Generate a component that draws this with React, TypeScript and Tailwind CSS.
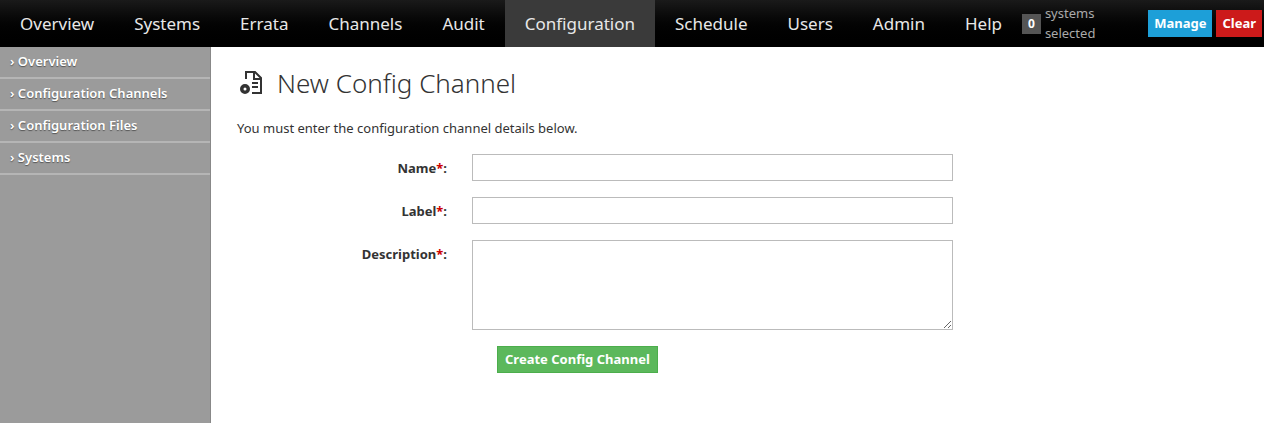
import React from "react"

const nav = ["Overview", "Systems", "Errata", "Channels", "Audit", "Configuration", "Schedule", "Users", "Admin", "Help"]
const side = ["Overview", "Configuration Channels", "Configuration Files", "Systems"]

function Label({ text }: { text: string }) {
  return (
    <div className="w-[235px] pr-[25px] text-right text-[13px] font-bold text-[#333] pt-[5px]">
      {text}
      <span className="text-[#c00]">*</span>:
    </div>
  )
}

export default function App() {
  return (
    <div className="h-[423px] flex flex-col bg-white font-['Open_Sans',sans-serif]">
      <div className="h-[47px] flex items-stretch bg-gradient-to-b from-[#1a1a1a] to-[#000] text-[#e8e8e8] text-[17px]">
        {nav.map((n) => (
          <div key={n} className={`flex items-center px-[20px] ${n === "Configuration" ? "bg-[#3a3a3a]" : ""}`}>
            {n}
          </div>
        ))}
        <div className="ml-auto flex items-center gap-[4px] pr-[2px] text-[13px]">
          <span className="bg-[#555] text-white font-bold px-[6px] py-[1px] text-[12px]">0</span>
          <span className="text-[#aaa] mr-[2px]">systems selected</span>
          <span className="bg-[#1d9fd8] text-white font-bold px-[6px] py-[4px]">Manage</span>
          <span className="bg-[#cc1a1a] text-white font-bold px-[6px] py-[4px]">Clear</span>
        </div>
      </div>
      <div className="flex flex-1">
        <div className="w-[211px] bg-[#9b9b9b] border-r border-[#888]">
          {side.map((s) => (
            <div key={s} className="h-[32px] flex items-center px-[10px] text-[13px] font-semibold text-white border-b-2 border-[#b5b5b5] [text-shadow:0_1px_1px_#555]">
              ›&nbsp;{s}
            </div>
          ))}
        </div>
        <div className="flex-1 pl-[26px]">
          <div className="flex items-center gap-[12px] mt-[20px] h-[32px]">
            <svg width="28" height="28" viewBox="0 0 28 28" fill="none" stroke="#333" strokeWidth="2">
              <path d="M9 10V3h9l6 6v15h-9" />
              <path d="M17 3v7h7" />
              <path d="M15 14h6M15 18h6" />
              <circle cx="8" cy="20" r="4" fill="#333" />
              <circle cx="8" cy="20" r="1.5" fill="#fff" stroke="none" />
            </svg>
            <span className="text-[26px] font-['Roboto',sans-serif] font-light text-[#333]">New Config Channel</span>
          </div>
          <p className="text-[13px] text-[#333] mt-[20px]">You must enter the configuration channel details below.</p>
          <div className="flex flex-col gap-[16px] mt-[15px]">
            <div className="flex">
              <Label text="Name" />
              <input className="w-[481px] h-[27px] border border-[#bbb]" />
            </div>
            <div className="flex">
              <Label text="Label" />
              <input className="w-[481px] h-[27px] border border-[#bbb]" />
            </div>
            <div className="flex">
              <Label text="Description" />
              <textarea className="w-[481px] h-[90px] border border-[#bbb]" />
            </div>
            <div className="pl-[260px]">
              <button className="bg-[#5cb85c] border border-[#4cae4c] text-white text-[13px] font-bold px-[7px] h-[27px]">
                Create Config Channel
              </button>
            </div>
          </div>
        </div>
      </div>
    </div>
  )
}
